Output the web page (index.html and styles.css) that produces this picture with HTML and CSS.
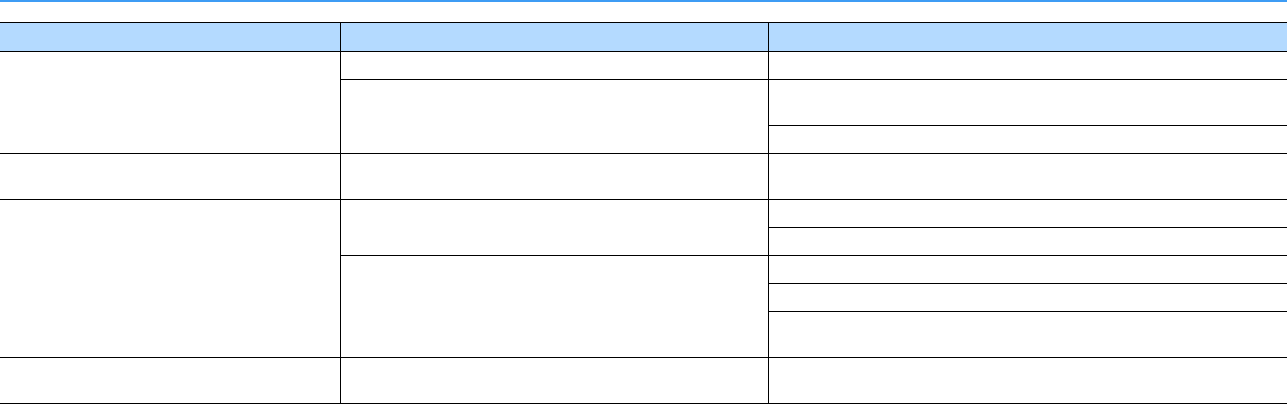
FILE: index.html
```html
<!DOCTYPE html>
<html lang="en">
<head>
<meta charset="utf-8">
<title>Table</title>
<link rel="stylesheet" href="styles.css">
</head>
<body>
<div class="topbar"></div>
<div class="grid">
  <div class="cell head c1"></div>
  <div class="cell head c2 bl"></div>
  <div class="cell head c3 bl"></div>

  <div class="cell c1 r1-3"></div>
  <div class="cell c2 bl r1"></div>
  <div class="cell c3 bl r1"></div>
  <div class="cell c2 bl r2-3"></div>
  <div class="cell c3 bl r2"></div>
  <div class="cell c3 bl r3"></div>

  <div class="cell c1 r4"></div>
  <div class="cell c2 bl r4"></div>
  <div class="cell c3 bl r4"></div>

  <div class="cell c1 r5-9"></div>
  <div class="cell c2 bl r5-6"></div>
  <div class="cell c3 bl r5"></div>
  <div class="cell c3 bl r6"></div>
  <div class="cell c2 bl r7-9"></div>
  <div class="cell c3 bl r7"></div>
  <div class="cell c3 bl r8"></div>
  <div class="cell c3 bl r9"></div>

  <div class="cell c1 r10"></div>
  <div class="cell c2 bl r10"></div>
  <div class="cell c3 bl r10"></div>
</div>
</body>
</html>
```

FILE: styles.css
```css
html, body {
  margin: 0;
  padding: 0;
  background: #ffffff;
  font-family: "Liberation Sans", Arial, sans-serif;
}

.topbar {
  height: 2px;
  background: #3d9cf4;
  margin-bottom: 20px;
}

.grid {
  display: grid;
  grid-template-columns: 340px 428px 1fr;
  grid-template-rows: 29px 28px 46px 28px 46px 28px 28px 28px 28px 46px 46px;
  border-top: 1px solid #000;
}

.cell {
  box-sizing: border-box;
  border-bottom: 1px solid #000;
}

.bl {
  border-left: 1px solid #000;
}

.head {
  background: #b4daff;
  grid-row: 1;
}

.c1 { grid-column: 1; }
.c2 { grid-column: 2; }
.c3 { grid-column: 3; }

.r1 { grid-row: 2; }
.r2 { grid-row: 3; }
.r3 { grid-row: 4; }
.r1-3 { grid-row: 2 / 5; }
.r2-3 { grid-row: 3 / 5; }
.r4 { grid-row: 5; }
.r5 { grid-row: 6; }
.r6 { grid-row: 7; }
.r7 { grid-row: 8; }
.r8 { grid-row: 9; }
.r9 { grid-row: 10; }
.r5-9 { grid-row: 6 / 11; }
.r5-6 { grid-row: 6 / 8; }
.r7-9 { grid-row: 8 / 11; }
.r10 { grid-row: 11; }
```
